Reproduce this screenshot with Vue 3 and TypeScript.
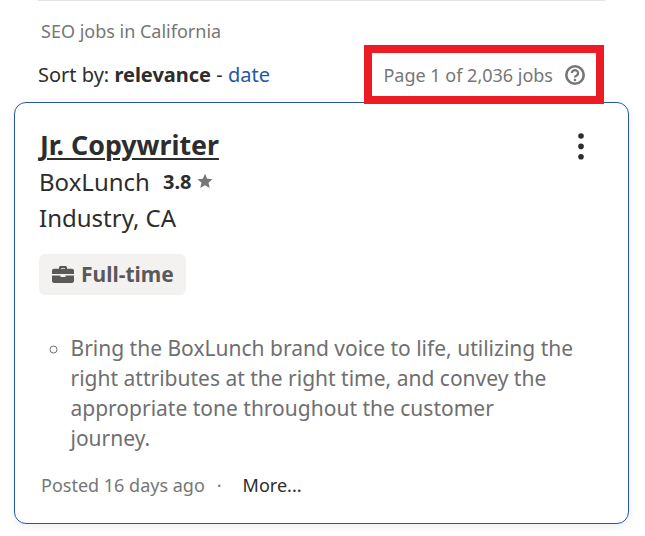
<script setup lang="ts">
const bullets: string[] = [
  'Bring the BoxLunch brand voice to life, utilizing the right attributes at the right time, and convey the appropriate tone throughout the customer journey.',
]
</script>

<template>
  <main class="page">
    <div class="rule"></div>
    <div class="heading">SEO jobs in California</div>
    <div class="sortbar">
      <div class="sort">Sort by: <b>relevance</b> - <a class="link">date</a></div>
      <div class="count">
        <span>Page 1 of 2,036 jobs</span>
        <svg class="help" width="20" height="20" viewBox="0 0 20 20" aria-hidden="true">
          <circle cx="10" cy="10" r="8.7" fill="none" stroke="#767676" stroke-width="2.6" />
          <path d="M6.9 8a3.1 2.9 0 1 1 5 2.3c-1 .7-1.9 1.1-1.9 2.2" fill="none" stroke="#767676" stroke-width="2.2" />
          <circle cx="10" cy="15" r="1.35" fill="#767676" />
        </svg>
      </div>
      <div class="highlight"></div>
    </div>
    <article class="card">
      <div class="title-row">
        <h2 class="title">Jr. Copywriter</h2>
        <svg class="kebab" width="8" height="28" viewBox="0 0 8 28" aria-hidden="true">
          <circle cx="4" cy="4" r="2.8" fill="#2d2d2d" />
          <circle cx="4" cy="14.4" r="2.8" fill="#2d2d2d" />
          <circle cx="4" cy="24.8" r="2.8" fill="#2d2d2d" />
        </svg>
      </div>
      <div class="company">
        <span>BoxLunch</span>
        <b class="rating">3.8</b>
        <svg width="16" height="16" viewBox="0 0 16 16" aria-hidden="true">
          <path d="M8 .8l2.2 4.9 5.3.5-4 3.5 1.2 5.2L8 12.2l-4.7 2.7 1.2-5.2-4-3.5 5.3-.5z" fill="#767676" />
        </svg>
      </div>
      <div class="location">Industry, CA</div>
      <div class="tag">
        <svg width="22" height="17" viewBox="0 0 22 18" preserveAspectRatio="none" aria-hidden="true">
          <path fill-rule="evenodd" d="M7 3V1.6C7 .7 7.7 0 8.6 0h4.8c.9 0 1.6.7 1.6 1.6V3h5c1.1 0 2 .9 2 2v3.6H0V5c0-1.1.9-2 2-2zm2-1v1h4V2z" fill="#595959" />
          <path d="M0 10h8.5v1.6h5V10H22v6c0 1.1-.9 2-2 2H2c-1.1 0-2-.9-2-2z" fill="#595959" />
        </svg>
        <span class="tag-label">Full-time</span>
      </div>
      <ul class="snippet">
        <li v-for="item in bullets" :key="item">{{ item }}</li>
      </ul>
      <div class="meta">
        <span>Posted 16 days ago</span>
        <span class="dot">·</span>
        <span class="more">More...</span>
      </div>
    </article>
  </main>
</template>

<style>
html, body {
  margin: 0;
  background: #fff;
}
</style>

<style scoped>
.page {
  width: 645px;
  height: 536px;
  overflow: hidden;
  box-sizing: border-box;
  padding: 0 16px 0 14px;
  font-family: "Noto Sans", sans-serif;
  color: #2d2d2d;
}
.rule {
  height: 1px;
  margin: 0 24px 0 24px;
  background: #e4e2e0;
}
.heading {
  margin: 18px 0 0 27px;
  font-size: 18px;
  line-height: 24px;
  color: #767676;
}
.sortbar {
  position: relative;
  display: flex;
  justify-content: space-between;
  align-items: center;
  height: 24px;
  margin: 20px 24px 0 24px;
}
.sort {
  font-size: 20px;
  line-height: 24px;
}
.sort b {
  font-weight: 700;
}
.link {
  color: #2557a7;
}
.count {
  display: flex;
  align-items: center;
  gap: 12px;
  margin-right: 20px;
  font-size: 18px;
  color: #767676;
}
.help {
  display: block;
}
.highlight {
  position: absolute;
  left: 326px;
  top: -18px;
  width: 240px;
  height: 59px;
  box-sizing: border-box;
  border: 8px solid #ed1c24;
  z-index: 2;
}
.card {
  box-sizing: border-box;
  height: 422px;
  margin-top: 15px;
  padding: 24px 24px 0 24px;
  border: 1px solid #2557a7;
  border-radius: 12px;
  box-shadow: 0 2px 8px rgba(0, 0, 0, 0.08);
}
.title-row {
  display: flex;
  justify-content: space-between;
  align-items: flex-start;
}
.title {
  margin: 0 0 0 1px;
  font-size: 26.75px;
  line-height: 36px;
  font-weight: 700;
  text-decoration: underline;
  text-decoration-thickness: 2px;
  text-underline-offset: 3px;
}
.kebab {
  display: block;
  margin: 5px 19px 0 0;
}
.company {
  display: flex;
  align-items: center;
  height: 36px;
  font-size: 24px;
}
.rating {
  margin-left: 13px;
  margin-right: 6px;
  font-size: 20px;
  font-weight: 700;
}
.location {
  margin-top: 1px;
  font-size: 24px;
  line-height: 36px;
}
.tag {
  display: inline-flex;
  align-items: center;
  gap: 7px;
  height: 41px;
  margin-top: 18px;
  padding: 0 12px 0 13px;
  border-radius: 6px;
  background: #f3f2f1;
  font-size: 21px;
  font-weight: 700;
  color: #595959;
}
.tag-label {
  margin-bottom: 2px;
}
.snippet {
  margin: 38px 0 0;
  padding: 0 28px 0 31.5px;
  list-style: circle;
  font-size: 21px;
  line-height: 30px;
  color: #6f6f6f;
}
.meta {
  display: flex;
  align-items: center;
  margin-top: 20px;
  padding-left: 2px;
  font-size: 18px;
  line-height: 24px;
  color: #767676;
}
.dot {
  margin-left: 12px;
}
.more {
  margin-left: 21px;
  color: #2d2d2d;
}
</style>
